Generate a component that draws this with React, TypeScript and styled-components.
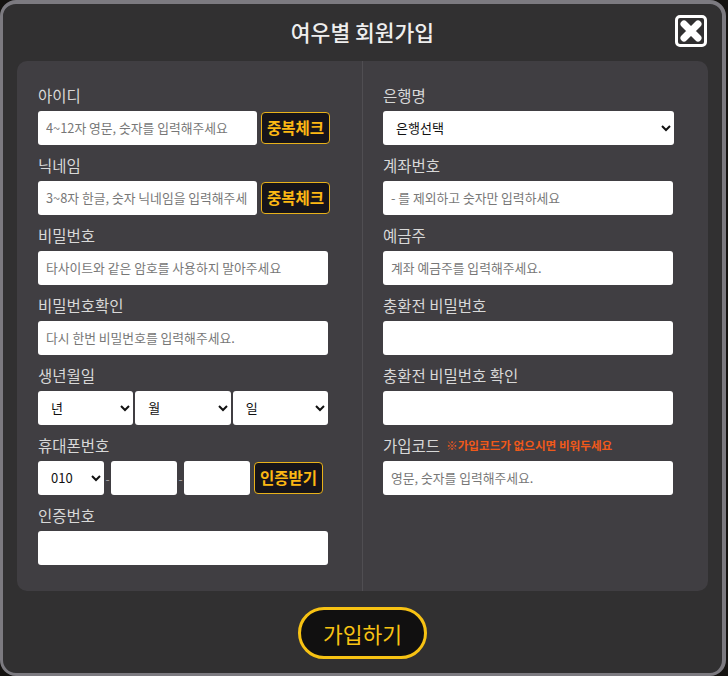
import React from 'react';
import styled, { createGlobalStyle } from 'styled-components';

const GlobalStyle = createGlobalStyle`
	html, body {
		margin: 0;
		padding: 0;
		background: #141210;
		font-family: "Noto Sans CJK KR", "Noto Sans", sans-serif;
	}
`;

const leftFields = [
	{ label: '비밀번호', placeholder: '타사이트와 같은 암호를 사용하지 말아주세요' },
	{ label: '비밀번호확인', placeholder: '다시 한번 비밀번호를 입력해주세요.' },
];

const rightFields = [
	{ label: '계좌번호', placeholder: '- 를 제외하고 숫자만 입력하세요' },
	{ label: '예금주', placeholder: '계좌 예금주를 입력해주세요.' },
	{ label: '충환전 비밀번호', placeholder: '' },
	{ label: '충환전 비밀번호 확인', placeholder: '' },
];

const App: React.FC = () => {
	return (
		<>
			<GlobalStyle />
			<Modal>
				<Header>
					<Title>여우별 회원가입</Title>
					<CloseButton aria-label="닫기">
						<svg width="24" height="24" viewBox="0 0 24 24">
							<path d="M5 5 L19 19 M19 5 L5 19" stroke="#fff" strokeWidth="7" strokeLinecap="round" />
						</svg>
					</CloseButton>
				</Header>
				<Panel>
					<Column>
						<Field>
							<Label>아이디</Label>
							<Row>
								<ShortInput placeholder="4~12자 영문, 숫자를 입력해주세요" />
								<CheckButton>중복체크</CheckButton>
							</Row>
						</Field>
						<Field>
							<Label>닉네임</Label>
							<Row>
								<ShortInput placeholder="3~8자 한글, 숫자 닉네임을 입력해주세요" />
								<CheckButton>중복체크</CheckButton>
							</Row>
						</Field>
						{leftFields.map((f) => (
							<Field key={f.label}>
								<Label>{f.label}</Label>
								<Input placeholder={f.placeholder} />
							</Field>
						))}
						<Field>
							<Label>생년월일</Label>
							<DateRow>
								<Select><option>년</option></Select>
								<Select><option>월</option></Select>
								<Select><option>일</option></Select>
							</DateRow>
						</Field>
						<Field>
							<Label>휴대폰번호</Label>
							<Row>
								<PhoneSelect><option>010</option></PhoneSelect>
								<Dash>-</Dash>
								<PhoneInput />
								<Dash>-</Dash>
								<PhoneInput />
								<CheckButton>인증받기</CheckButton>
							</Row>
						</Field>
						<Field>
							<Label>인증번호</Label>
							<Input />
						</Field>
					</Column>
					<RightColumn>
						<Field>
							<Label>은행명</Label>
							<BankSelect><option>은행선택</option></BankSelect>
						</Field>
						{rightFields.map((f) => (
							<Field key={f.label}>
								<Label>{f.label}</Label>
								<Input placeholder={f.placeholder} />
							</Field>
						))}
						<Field>
							<Label>
								가입코드
								<Notice>※가입코드가 없으시면 비워두세요</Notice>
							</Label>
							<Input placeholder="영문, 숫자를 입력해주세요." />
						</Field>
					</RightColumn>
				</Panel>
				<Footer>
					<SubmitButton>가입하기</SubmitButton>
				</Footer>
			</Modal>
		</>
	);
};

const Modal = styled.div`
	box-sizing: border-box;
	width: 726px;
	height: 676px;
	padding: 0 14px;
	background: #313031;
	border: 3px solid #7c7a80;
	border-top-width: 4px;
	border-right-width: 4px;
	border-radius: 16px;
`;

const Header = styled.div`
	position: relative;
	display: flex;
	align-items: center;
	justify-content: center;
	height: 57px;
`;

const Title = styled.h1`
	margin: 0;
	padding-bottom: 2px;
	font-size: 21.5px;
	font-weight: 500;
	color: #eeeeee;
`;

const CloseButton = styled.button`
	position: absolute;
	top: 11px;
	right: 1px;
	box-sizing: border-box;
	display: flex;
	align-items: center;
	justify-content: center;
	width: 32px;
	height: 32px;
	padding: 0;
	background: transparent;
	border: 3px solid #fff;
	border-radius: 5px;
`;

const Panel = styled.div`
	display: flex;
	height: 530px;
	background: #403e42;
	border-radius: 10px;
`;

const Column = styled.div`
	box-sizing: border-box;
	display: flex;
	flex-direction: column;
	width: 345px;
	padding: 16px 0 0 21px;
`;

const RightColumn = styled(Column)`
	width: 346px;
	padding-left: 20px;
	border-left: 1px solid #504e52;
`;

const Field = styled.div`
	display: flex;
	flex-direction: column;
	width: 291px;
	height: 70px;
`;

const Label = styled.label`
	box-sizing: border-box;
	display: flex;
	align-items: center;
	height: 34px;
	padding-top: 2px;
	font-size: 15.5px;
	color: #d8d8d8;
	white-space: nowrap;
`;

const Notice = styled.span`
	margin-left: 6px;
	font-size: 11.6px;
	font-weight: 700;
	color: #f0591a;
`;

const Row = styled.div`
	display: flex;
	align-items: center;
`;

const DateRow = styled.div`
	display: flex;
	gap: 2px;
	width: 290px;

	select {
		flex: 1;
		min-width: 0;
	}
`;

const Input = styled.input`
	box-sizing: border-box;
	width: 290px;
	height: 34px;
	padding: 0 8px 2px;
	background: #fff;
	border: 0;
	border-radius: 3px;
	font-family: inherit;
	font-size: 12.8px;
	color: #222;

	&::placeholder {
		color: #777;
	}
`;

const ShortInput = styled(Input)`
	width: 219px;
	padding-right: 10px;
	flex-shrink: 0;
`;

const PhoneInput = styled(Input)`
	width: 66px;
	flex-shrink: 0;
`;

const Select = styled.select`
	box-sizing: border-box;
	width: 290px;
	height: 34px;
	padding: 0 9px 2px;
	background: #fff;
	border: 0;
	border-radius: 3px;
	font-family: inherit;
	font-size: 13px;
	color: #111;
`;

const BankSelect = styled(Select)`
	width: 291px;
`;

const PhoneSelect = styled(Select)`
	width: 66px;
	flex-shrink: 0;
`;

const Dash = styled.span`
	width: 7px;
	text-align: center;
	font-size: 12px;
	color: #aaa;
`;

const CheckButton = styled.button`
	box-sizing: border-box;
	width: 69px;
	height: 32px;
	margin-left: 4px;
	padding: 0 0 2px;
	flex-shrink: 0;
	background: #16141a;
	border: 1px solid #e8b11a;
	border-radius: 4px;
	font-family: inherit;
	font-size: 15.5px;
	font-weight: 700;
	color: #fdb813;
	white-space: nowrap;
`;

const Footer = styled.div`
	display: flex;
	justify-content: center;
	padding-top: 16px;
`;

const SubmitButton = styled.button`
	box-sizing: border-box;
	width: 129px;
	height: 52px;
	padding: 0;
	background: #111010;
	border: 3px solid #f7c213;
	border-radius: 26px;
	font-family: inherit;
	font-size: 21.5px;
	color: #f7c213;
`;

export default App;
